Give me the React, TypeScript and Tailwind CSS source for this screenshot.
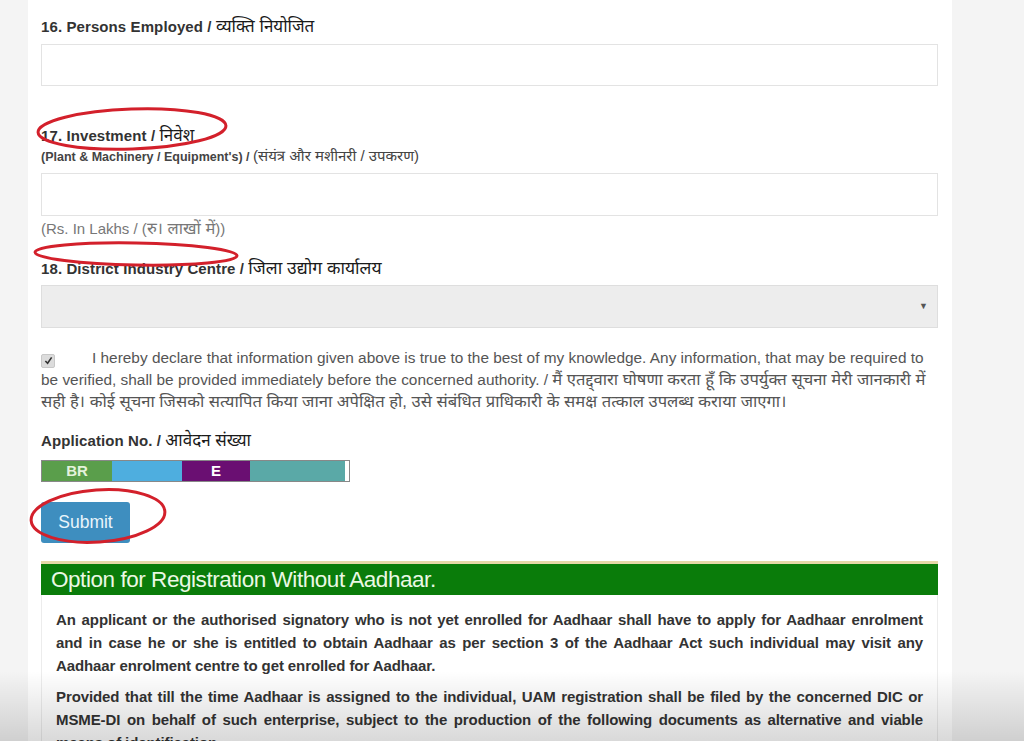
import React from "react";

const font = { fontFamily: '"Liberation Sans", Arial, "Noto Sans Devanagari", "Noto Sans", sans-serif' };

function JLine({ children, last }: { children: React.ReactNode; last?: boolean }) {
  return (
    <div className={last ? "whitespace-nowrap" : "whitespace-nowrap text-justify [text-align-last:justify]"}>{children}</div>
  );
}

export default function App() {
  return (
    <div className="relative flex w-[1024px] h-[741px] overflow-hidden bg-[#f4f4f4]" style={font}>
      <div className="w-[28px] shrink-0" />
      <div className="w-[924px] shrink-0 bg-white pl-[13px] pr-[14px] pt-[17px] text-[#333]">
        <div className="h-[20px] leading-[20px] text-[15px] font-bold tracking-[0.1px] text-[#333]">
          16. Persons Employed / <span className="font-normal text-[17px] text-[#1a1a1a] tracking-normal">व्यक्ति नियोजित</span>
        </div>
        <div className="mt-[7px] h-[42px] border border-[#e3e3e3] bg-white" />

        <div className="mt-[40px] h-[20px] leading-[20px] text-[15px] font-bold tracking-[0.1px]">
          17. Investment / <span className="font-normal text-[17px] text-[#1a1a1a] tracking-normal">निवेश</span>
        </div>
        <div className="mt-[3px] h-[14px] leading-[14px] text-[12.5px] font-bold text-[#444] whitespace-nowrap">
          (Plant &amp; Machinery / Equipment's) / <span className="font-normal text-[15px]">(संयंत्र और मशीनरी / उपकरण)</span>
        </div>
        <div className="mt-[10px] h-[43px] border border-[#e3e3e3] bg-white" />
        <div className="mt-[4px] h-[16px] leading-[16px] text-[15px] text-[#777]">
          (Rs. In Lakhs / (<span className="text-[16.5px]">रु। लाखों में</span>))
        </div>

        <div className="mt-[22px] h-[20px] leading-[20px] text-[15px] font-bold tracking-[0.1px]">
          18. District Industry Centre / <span className="font-normal text-[17.5px] text-[#1a1a1a] tracking-normal">जिला उद्योग कार्यालय</span>
        </div>
        <div className="mt-[7px] h-[43px] border border-[#dedede] bg-[#ededed] flex items-center justify-end pr-[9px]">
          <span className="text-[9px] text-[#555]">▼</span>
        </div>

        <div className="mt-[19px] text-[15.4px] leading-[22px] text-[#555]">
          <div className="whitespace-nowrap">
            <span className="inline-flex align-[-2px] items-center justify-center w-[14px] h-[14px] rounded-[2px] bg-[#dcdcdc] border border-[#c8c8c8] mr-[37px]">
              <svg width="9" height="9" viewBox="0 0 10 10"><path d="M1.5 5.5 L4 8 L8.5 1.5" fill="none" stroke="#333" strokeWidth="1.8" /></svg>
            </span>
            I hereby declare that information given above is true to the best of my knowledge. Any information, that may be required to
          </div>
          <div className="whitespace-nowrap">
            be verified, shall be provided immediately before the concerned authority. / <span className="text-[16.6px]">मैं एतद्द्वारा घोषणा करता हूँ कि उपर्युक्त सूचना मेरी जानकारी में</span>
          </div>
          <div className="whitespace-nowrap text-[16.6px]">
            सही है। कोई सूचना जिसको सत्यापित किया जाना अपेक्षित हो, उसे संबंधित प्राधिकारी के समक्ष तत्काल उपलब्ध कराया जाएगा।
          </div>
        </div>

        <div className="mt-[18px] h-[20px] leading-[20px] text-[15px] font-bold tracking-[0.1px]">
          Application No. / <span className="font-normal text-[17px] text-[#1a1a1a] tracking-normal">आवेदन संख्या</span>
        </div>
        <div className="mt-[9px] flex h-[22px] w-[309px] border border-[#888] text-[15px] font-bold leading-[20px]">
          <div className="w-[70px] bg-[#5a9e4b] text-center text-[#e4f2dc]">BR</div>
          <div className="w-[70px] bg-[#4eaedf]" />
          <div className="w-[68px] bg-[#6a0f72] text-center text-white">E</div>
          <div className="w-[95px] bg-[#5aa9a7]" />
          <div className="flex-1 bg-white" />
        </div>

        <button className="mt-[20px] block h-[41px] w-[89px] rounded-[3px] bg-[#3e8ebf] text-[17.5px] text-[#eaf5fb]">Submit</button>

        <div className="mt-[18px] border-t-[3px] border-[#e6d8a8]">
          <div className="h-[31px] bg-[#0a7c0a] pl-[10px] text-[22.5px] leading-[31px] text-[#eaf8e4] tracking-[-0.45px] whitespace-nowrap">
            Option for Registration Without Aadhaar.
          </div>
        </div>
        <div className="border-x border-[#ececec] px-[14px] pt-[13px] text-[15px] leading-[23px] font-bold text-[#333] tracking-[-0.1px]">
          <div>
            <JLine>An applicant or the authorised signatory who is not yet enrolled for Aadhaar shall have to apply for Aadhaar enrolment</JLine>
            <JLine>and in case he or she is entitled to obtain Aadhaar as per section 3 of the Aadhaar Act such individual may visit any</JLine>
            <JLine last>Aadhaar enrolment centre to get enrolled for Aadhaar.</JLine>
          </div>
          <div className="mt-[8px]">
            <JLine>Provided that till the time Aadhaar is assigned to the individual, UAM registration shall be filed by the concerned DIC or</JLine>
            <JLine>MSME-DI on behalf of such enterprise, subject to the production of the following documents as alternative and viable</JLine>
            <JLine last>means of identification.</JLine>
          </div>
        </div>
      </div>
      <div className="flex-1" />

      <svg className="pointer-events-none absolute left-0 top-0" width="1024" height="741">
        <ellipse cx="132" cy="129" rx="94" ry="20" fill="none" stroke="#d3202b" strokeWidth="3" transform="rotate(-2 132 129)" />
        <ellipse cx="136" cy="254" rx="101" ry="11" fill="none" stroke="#d3202b" strokeWidth="3" transform="rotate(1 136 254)" />
        <ellipse cx="98" cy="516" rx="67" ry="26" fill="none" stroke="#d3202b" strokeWidth="3" transform="rotate(-4 98 516)" />
      </svg>
      <div className="pointer-events-none absolute bottom-0 left-0 h-[70px] w-full bg-gradient-to-b from-transparent to-black/15" />
    </div>
  );
}
